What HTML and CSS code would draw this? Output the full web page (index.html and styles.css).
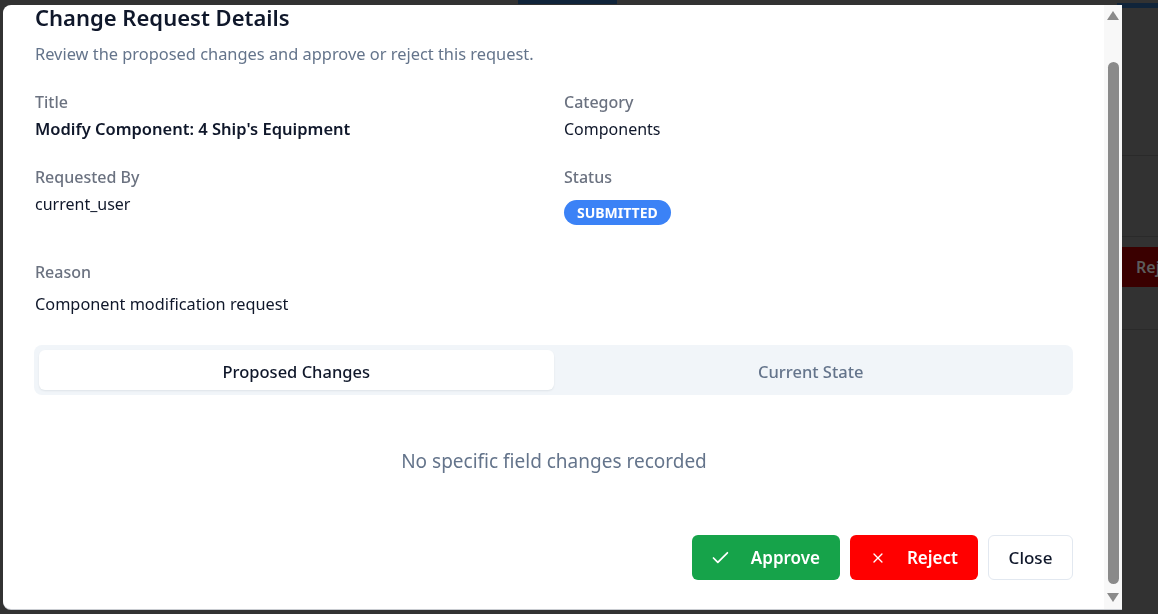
FILE: index.html
```html
<!DOCTYPE html>
<html lang="en">
<head>
<meta charset="utf-8">
<title>Change Request Details</title>
<link rel="stylesheet" href="styles.css">
</head>
<body>
<div class="page">
  <div class="topbar">
    <div class="topbar-seg"></div>
    <div class="topbar-seg2"></div>
  </div>
  <div class="main">
    <div class="side">
      <div class="side-row side-row-a"></div>
      <div class="side-row side-row-b">
        <span class="side-btn">Reject</span>
      </div>
      <div class="side-row side-row-c"></div>
    </div>
  </div>
</div>
<div class="overlay">
  <div class="modal">
    <div class="modal-body">
      <h2 class="modal-title">Change Request Details</h2>
      <p class="modal-desc">Review the proposed changes and approve or reject this request.</p>
      <div class="info-grid">
        <div class="field">
          <div class="label">Title</div>
          <div class="value value-strong">Modify Component: 4 Ship's Equipment</div>
        </div>
        <div class="field">
          <div class="label">Category</div>
          <div class="value">Components</div>
        </div>
        <div class="field">
          <div class="label">Requested By</div>
          <div class="value">current_user</div>
        </div>
        <div class="field">
          <div class="label">Status</div>
          <span class="badge">SUBMITTED</span>
        </div>
      </div>
      <div class="reason">
        <div class="label">Reason</div>
        <div class="reason-value">Component modification request</div>
      </div>
      <div class="tabs">
        <div class="tab tab-active">Proposed Changes</div>
        <div class="tab">Current State</div>
      </div>
      <div class="empty">No specific field changes recorded</div>
      <div class="actions">
        <button class="btn btn-approve">
          <svg class="btn-icon" viewBox="0 0 24 24" fill="none" stroke="currentColor" stroke-width="2" stroke-linecap="round" stroke-linejoin="round"><path d="M20 6 9 17l-5-5"/></svg>
          <span>Approve</span>
        </button>
        <button class="btn btn-reject">
          <svg class="btn-icon" viewBox="0 0 24 24" fill="none" stroke="currentColor" stroke-width="2" stroke-linecap="round" stroke-linejoin="round"><path d="M18 6 6 18"/><path d="m6 6 12 12"/></svg>
          <span>Reject</span>
        </button>
        <button class="btn btn-close">Close</button>
      </div>
    </div>
    <div class="scrollbar">
      <div class="sb-arrow sb-up"></div>
      <div class="sb-track"><div class="sb-thumb"></div></div>
      <div class="sb-arrow sb-down"></div>
    </div>
  </div>
</div>
</body>
</html>
```

FILE: styles.css
```css
* { box-sizing: border-box; }
html, body { margin: 0; padding: 0; }
body {
  width: 1158px;
  height: 614px;
  overflow: hidden;
  background: #323232;
  font-family: "Noto Sans", "Open Sans", sans-serif;
}

/* page behind the overlay */
.page {
  height: 614px;
  display: flex;
  flex-direction: column;
}
.topbar {
  height: 8px;
  display: flex;
}
.topbar-seg {
  margin-left: 518px;
  width: 99px;
  height: 4px;
  background: #10243a;
}
.topbar-seg2 {
  margin-left: auto;
  margin-top: 3px;
  width: 41px;
  height: 5px;
  background: #10243a;
}
.main {
  flex: 1;
  display: flex;
  justify-content: flex-end;
}
.side {
  width: 36px;
  padding-top: 147px;
  display: flex;
  flex-direction: column;
}
.side-row { border-top: 1px solid #2a2a2a; }
.side-row-a { height: 81px; }
.side-row-b { height: 93px; padding-top: 10px; }
.side-row-c { height: 40px; }
.side-btn {
  display: block;
  width: 60px;
  height: 40px;
  padding: 9px 0 0 14px;
  background: #3a0000;
  color: #5c5c5c;
  font-size: 16px;
  font-weight: 600;
  white-space: nowrap;
  overflow: hidden;
}

/* overlay + modal */
.overlay {
  position: fixed;
  inset: 0;
}
.modal {
  margin: 5px 0 0 3px;
  width: 1119px;
  height: 604px;
  background: #ffffff;
  border-radius: 8px 0 0 8px;
  display: flex;
  overflow: hidden;
  box-shadow: 0 1px 0 #c9ccd1;
}
.modal-body {
  flex: 1;
  padding: 0 31px 0 32px;
  color: #0f172a;
}
.modal-title {
  margin: -4px 0 0;
  font-size: 22px;
  line-height: 32px;
  font-weight: 600;
  color: #0f172a;
}
.modal-desc {
  margin: 9px 0 0;
  font-size: 16.4px;
  line-height: 24px;
  color: #64748b;
}
.info-grid {
  margin-top: 24px;
  display: grid;
  grid-template-columns: 1fr 1fr;
  column-gap: 20px;
  row-gap: 24px;
}
.label {
  font-size: 16px;
  line-height: 24px;
  font-weight: 500;
  color: #6b7280;
}
.value {
  margin-top: 3px;
  font-size: 16px;
  line-height: 24px;
  color: #0f172a;
}
.value-strong { font-weight: 600; font-size: 16.5px; }
.badge {
  display: inline-flex;
  align-items: center;
  margin-top: 11px;
  height: 25px;
  padding: 0 13px;
  border-radius: 999px;
  background: #3b82f6;
  color: #ffffff;
  font-size: 14px;
  font-weight: 700;
}
.reason { margin-top: 35px; }
.reason-value {
  margin-top: 8px;
  font-size: 16.3px;
  line-height: 24px;
  color: #0f172a;
}
.tabs {
  margin-top: 29px;
  margin-left: -1px;
  height: 50px;
  padding: 5px;
  background: #f1f5f9;
  border-radius: 8px;
  display: grid;
  grid-template-columns: 1fr 1fr;
}
.tab {
  display: flex;
  align-items: center;
  justify-content: center;
  padding-top: 2px;
  border-radius: 6px;
  font-size: 16.5px;
  font-weight: 500;
  color: #64748b;
}
.tab-active {
  background: #ffffff;
  color: #0f172a;
  box-shadow: 0 1px 2px rgba(15, 23, 42, 0.08);
}
.empty {
  margin-top: 52px;
  text-align: center;
  font-size: 19px;
  line-height: 28px;
  color: #64748b;
}
.actions {
  margin-top: 60px;
  display: flex;
  justify-content: flex-end;
  gap: 10px;
}
.btn {
  height: 45px;
  border-radius: 6px;
  border: none;
  display: inline-flex;
  align-items: center;
  gap: 20px;
  padding: 0 20px;
  font-family: inherit;
  font-size: 17px;
  font-weight: 600;
  color: #ffffff;
}
.btn-icon { width: 22px; height: 22px; }
.btn-approve { background: #16a34a; width: 148px; padding-left: 18px; }
.btn-reject { background: #ff0000; width: 128px; gap: 21px; }
.btn-close {
  background: #ffffff;
  color: #0f172a;
  border: 1px solid #e2e8f0;
  width: 85px;
  justify-content: center;
  padding: 0;
  font-weight: 500;
}

/* drawn scrollbar */
.scrollbar {
  width: 18px;
  background: #f8f8f8;
  display: flex;
  flex-direction: column;
  align-items: center;
}
.sb-arrow {
  width: 0;
  height: 0;
  border-left: 6px solid transparent;
  border-right: 6px solid transparent;
}
.sb-up {
  margin-top: 6px;
  border-bottom: 9px solid #8a8a8a;
}
.sb-down {
  margin-bottom: 7px;
  border-top: 9px solid #8a8a8a;
}
.sb-track {
  flex: 1;
  width: 100%;
  display: flex;
  justify-content: center;
  padding: 42px 0 9px;
}
.sb-thumb {
  width: 11px;
  border-radius: 6px;
  background: #8a8a8a;
}
```
